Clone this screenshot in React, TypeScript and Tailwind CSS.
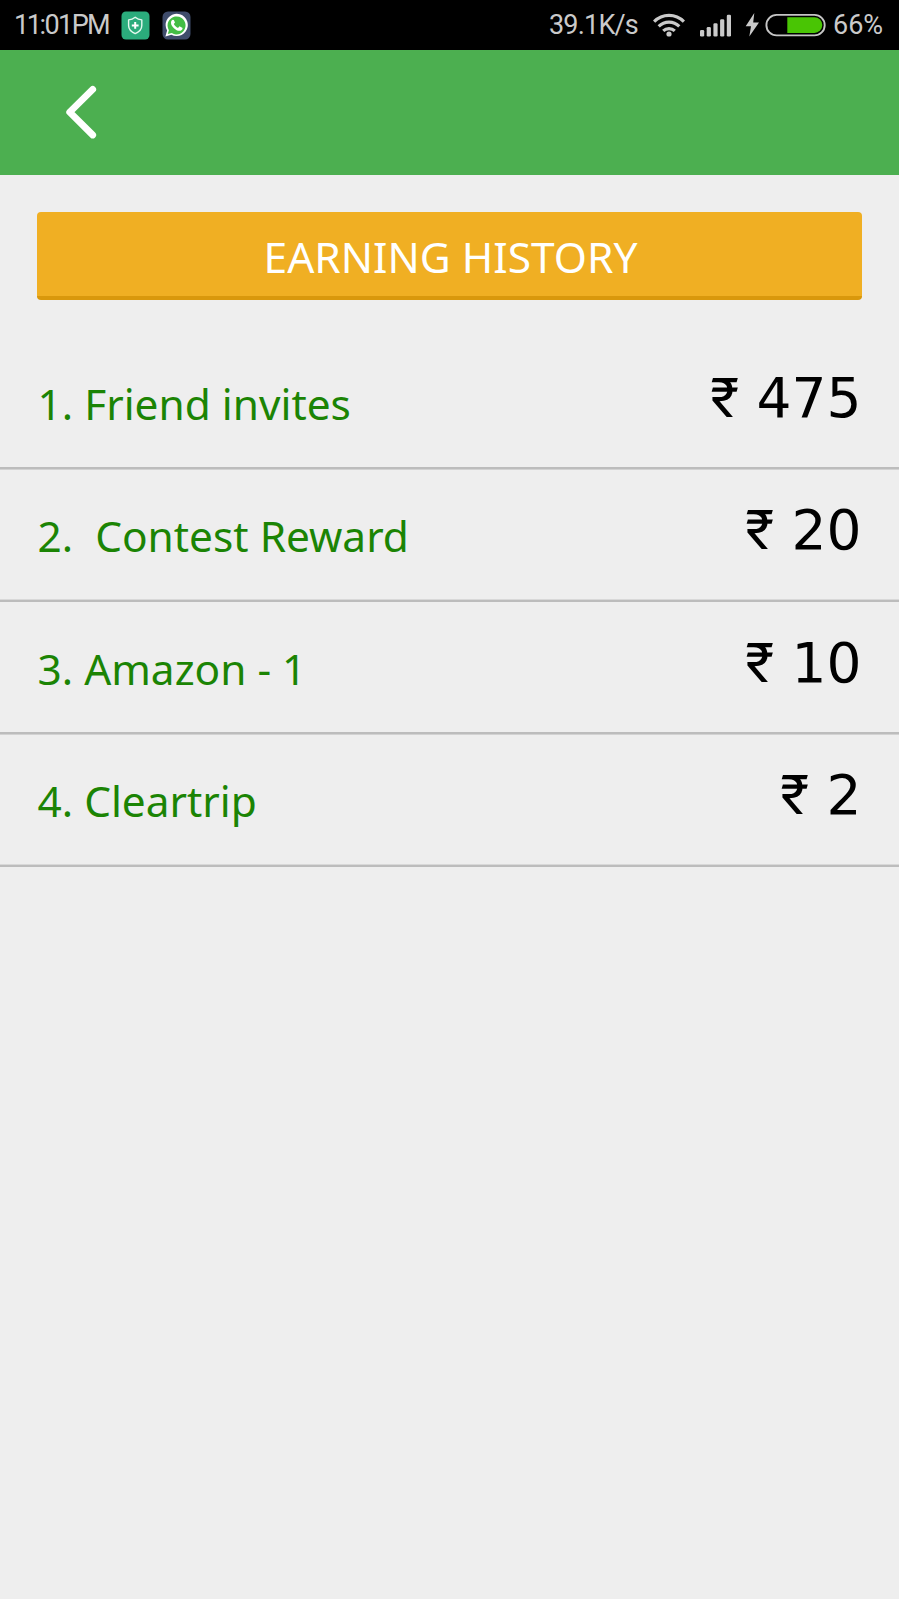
import React from 'react';

interface Earning {
  label: string;
  amount: string;
}

const earnings: Earning[] = [
  { label: '1. Friend invites', amount: '475' },
  { label: '2.  Contest Reward', amount: '20' },
  { label: '3. Amazon - 1', amount: '10' },
  { label: '4. Cleartrip', amount: '2' },
];

function ShieldIcon() {
  return (
    <svg width="29" height="29" viewBox="0 0 29 29" fill="none">
      <rect x="0.5" y="0.5" width="28" height="28" rx="4.5" fill="#2bac7c" />
      <path
        d="M14.2 6.3 C12.1 8 10 8.7 7.6 8.9 V14.5 C7.6 18.4 10.3 20.9 14.2 22.6 C18.1 20.9 20.8 18.4 20.8 14.5 V8.9 C18.4 8.7 16.3 8 14.2 6.3 Z"
        stroke="#e4f8ee" strokeWidth="1.4" strokeLinejoin="round"
      />
      <path d="M14.2 11 V17.8 M10.8 14.4 H17.6" stroke="#fff" strokeWidth="2" />
    </svg>
  );
}

function WhatsappIcon() {
  return (
    <svg width="29" height="29" viewBox="0 0 29 29" fill="none">
      <rect x="0.5" y="0.5" width="28" height="28" rx="5.5" fill="#3f4c6b" />
      <path d="M3.4 25.4 L5.1 19.5 A11.1 11.1 0 1 1 9.4 23.7 Z" fill="#fff" />
      <path d="M5.8 23.1 L6.9 19.2 A9 9 0 1 1 9.8 22.1 Z" fill="#43bd45" />
      <path
        d="M10.9 8.8 C10.3 8.8 8.9 9.8 9 11.9 C9.2 15.6 14 19.7 17.4 19.8 C19.2 19.8 20.6 18.6 20.6 16.9 L17.5 15.2 L16 16.9 C14.2 16.2 12.7 14.8 11.8 13 L13 11.6 L11.8 8.9 Z"
        fill="#fff"
      />
    </svg>
  );
}

function WifiIcon() {
  return (
    <svg width="32" height="24" viewBox="0 0 32 24" fill="none" stroke="#cacaca" strokeWidth="3.1">
      <path d="M1.1 8.7 C9.4 0.3 22.6 0.3 30.9 8.7" />
      <path d="M5.7 13.4 C11.4 7.7 20.6 7.7 26.3 13.4" />
      <path d="M10.2 17.9 C13.4 14.8 18.6 14.8 21.8 17.9" />
      <circle cx="16" cy="21" r="2.6" fill="#cacaca" stroke="none" />
    </svg>
  );
}

function SignalIcon() {
  return (
    <svg width="31" height="23" viewBox="0 0 31 23" fill="#cacaca">
      <rect x="0" y="16" width="4.2" height="6.5" rx="1.3" />
      <rect x="6.7" y="13" width="4.2" height="9.5" rx="1.3" />
      <rect x="13.4" y="9.3" width="4.2" height="13.2" rx="1.3" />
      <rect x="20.1" y="5.3" width="4.2" height="17.2" rx="1.3" />
      <rect x="26.8" y="0.7" width="4.2" height="21.8" rx="1.3" />
    </svg>
  );
}

function BatteryIcon() {
  return (
    <svg width="81" height="26" viewBox="0 0 81 26" fill="none">
      <path d="M9.3 1 L0.7 14.2 H6 L4.3 24.6 L14 10.6 H8.2 Z" fill="#cacaca" />
      <rect x="21.4" y="2.9" width="58.3" height="20.5" rx="10.25" stroke="#c5c5c5" strokeWidth="1.9" />
      <path d="M42.3 5.3 H69.5 A7.8 7.8 0 0 1 69.5 20.9 H42.3 Z" fill="#49c504" />
    </svg>
  );
}

function StatusBar() {
  return (
    <div className="flex h-[50px] items-center bg-black font-['Roboto',sans-serif] text-[27px] leading-none text-[#cacaca]">
      <span className="ml-[14px] w-[107px] pt-px whitespace-nowrap tracking-[-1.6px]">
        <span className="tracking-[-2.4px]">11</span>:01PM
      </span>
      <ShieldIcon />
      <div className="ml-[11.5px]">
        <WhatsappIcon />
      </div>
      <span className="ml-auto pt-px whitespace-nowrap tracking-[-0.8px]">39.1K/s</span>
      <div className="ml-[15px]">
        <WifiIcon />
      </div>
      <div className="ml-[15px] pt-px">
        <SignalIcon />
      </div>
      <div className="ml-[14px]">
        <BatteryIcon />
      </div>
      <span className="mr-[14px] ml-[7px] w-[52px] pt-px whitespace-nowrap tracking-[0px]">66%</span>
    </div>
  );
}

function EarningRow({ label, amount }: Earning) {
  return (
    <li className="flex h-[132.5px] justify-between border-b-2 border-[#bcbcbc] px-[37.5px] odd:shadow-[0_1px_0_#d2d2d2] even:shadow-[inset_0_-1px_0_#d8d8d8]">
      <span className="pt-[38px] font-['Noto_Sans',sans-serif] text-[42.4px] leading-[57px] whitespace-pre text-[#1b8404]">
        {label}
      </span>
      <span className="pt-[29px] font-['DejaVu_Sans',sans-serif] text-[55px] leading-[64px] whitespace-pre text-black">
        <span className="font-['Roboto',sans-serif]">₹</span> {amount}
      </span>
    </li>
  );
}

export default function App() {
  return (
    <div className="flex h-[1599px] w-[899px] flex-col overflow-hidden bg-[#eeeeee]">
      <StatusBar />

      <header className="flex h-[125px] items-center bg-[#4caf50] pb-[2px] pl-[66px]">
        <button type="button" aria-label="Back">
          <svg width="32" height="54" viewBox="0 0 32 54" fill="none">
            <path
              d="M26.7 4.4 L3.7 27.2 L26.7 50"
              stroke="#fff" strokeWidth="6.8" strokeLinecap="round" strokeLinejoin="round"
            />
          </svg>
        </button>
      </header>

      <main className="flex flex-col pt-[37px]">
        <h1 className="mx-[37.4px] h-[88px] rounded-[4px] border-b-4 border-[#d9980c] bg-[#f0af23] pt-[15.5px] pl-[2px] text-center font-['Noto_Sans',sans-serif] text-[42.5px] leading-[57px] text-white">
          EARNING HISTORY
        </h1>

        <ul className="mt-[36.9px] flex flex-col">
          {earnings.map((earning) => (
            <EarningRow key={earning.label} {...earning} />
          ))}
        </ul>
      </main>
    </div>
  );
}
